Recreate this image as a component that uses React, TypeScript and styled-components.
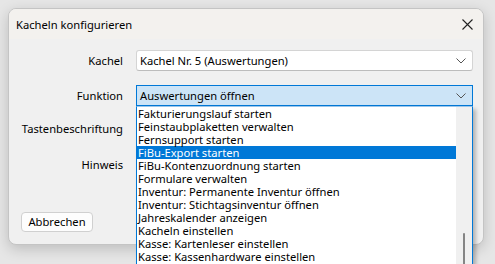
import { styled, createGlobalStyle } from "styled-components";

const GlobalStyle = createGlobalStyle`
  html, body {
    margin: 0;
    padding: 0;
    background: #e6e6e6;
    overflow: hidden;
  }

  body {
    font-family: "Noto Sans", "Open Sans", sans-serif;
    font-size: 11.2px;
    color: #000;
  }
`;

const items = [
  "Fakturierungslauf starten",
  "Feinstaubplaketten verwalten",
  "Fernsupport starten",
  "FiBu-Export starten",
  "FiBu-Kontenzuordnung starten",
  "Formulare verwalten",
  "Inventur: Permanente Inventur öffnen",
  "Inventur: Stichtagsinventur öffnen",
  "Jahreskalender anzeigen",
  "Kacheln einstellen",
  "Kasse: Kartenleser einstellen",
  "Kasse: Kassenhardware einstellen",
];

const Chevron = () => (
  <svg width="10" height="6" viewBox="0 0 10 6">
    <polyline points="0.5,0.5 5,5 9.5,0.5" fill="none" stroke="#555" strokeWidth="1" />
  </svg>
);

export default function App() {
  return (
    <>
      <GlobalStyle />
      <Page>
        <DialogStyled>
          <TitleBar>
            <span>Kacheln konfigurieren</span>
            <CloseButton aria-label="Schließen">
              <svg width="11" height="11" viewBox="0 0 11 11">
                <path d="M0.5 0.5 L10.5 10.5 M10.5 0.5 L0.5 10.5" stroke="#222" strokeWidth="1.1" />
              </svg>
            </CloseButton>
          </TitleBar>

          <Body>
            <Row $top={11}>
              <Label>Kachel</Label>
              <Combo>
                <span>Kachel Nr. 5 (Auswertungen)</span>
                <Chevron />
              </Combo>
            </Row>

            <Row $top={14}>
              <Label>Funktion</Label>
              <FieldWrap>
                <Combo $active>
                  <span>Auswertungen öffnen</span>
                  <Chevron />
                </Combo>

                <DropList>
                  <Options>
                    {items.map((item) => (
                      <Option key={item} $selected={item === "FiBu-Export starten"}>
                        {item}
                      </Option>
                    ))}
                  </Options>
                  <ScrollTrack>
                    <ScrollThumb />
                  </ScrollTrack>
                </DropList>
              </FieldWrap>
            </Row>

            <Row $top={12}>
              <Label>Tastenbeschriftung</Label>
              <TextBox />
            </Row>

            <Row $top={15}>
              <Label>Hinweis</Label>
              <TextBox />
            </Row>

            <Footer>
              <Button>Abbrechen</Button>
            </Footer>
          </Body>
        </DialogStyled>
      </Page>
    </>
  );
}

const Page = styled.div`
  width: 495px;
  height: 264px;
  padding: 8px 0 0 8px;
  box-sizing: border-box;
`;

const DialogStyled = styled.div`
  width: 476px;
  height: 237px;
  box-sizing: border-box;
  border: 1px solid #c4c4c4;
  border-radius: 8px;
  background: #f0f0f0;
  box-shadow: 0 4px 14px rgba(0, 0, 0, 0.18);
  display: flex;
  flex-direction: column;
`;

const TitleBar = styled.div`
  height: 30px;
  flex-shrink: 0;
  display: flex;
  align-items: center;
  justify-content: space-between;
  padding: 0 9px 0 7px;
  background: #f3f1ee;
  border-radius: 7px 7px 0 0;
`;

const CloseButton = styled.div`
  display: flex;
  align-items: center;
  justify-content: center;
  width: 14px;
  height: 14px;
`;

const Body = styled.div`
  flex: 1;
  display: flex;
  flex-direction: column;
  padding: 0 10px 12px 12px;
  border-radius: 0 0 7px 7px;
`;

const Row = styled.div<{ $top: number }>`
  display: grid;
  grid-template-columns: 102px 337px;
  column-gap: 13px;
  align-items: center;
  height: 21px;
  margin-top: ${({ $top }) => $top}px;
`;

const Label = styled.label`
  text-align: right;
  white-space: nowrap;
  padding-bottom: 1px;
`;

const FieldWrap = styled.div`
  position: relative;
  height: 21px;
`;

const Combo = styled.div<{ $active?: boolean }>`
  height: 21px;
  box-sizing: border-box;
  display: flex;
  align-items: center;
  justify-content: space-between;
  padding: 0 6px 1px 3px;
  background: ${({ $active }) => ($active ? "#cce4f7" : "#fff")};
  border: 1px solid ${({ $active }) => ($active ? "#0078d7" : "#d4d4d4")};
  border-bottom-color: ${({ $active }) => ($active ? "#0078d7" : "#bcbcbc")};
  border-radius: ${({ $active }) => ($active ? "0" : "3px")};
  white-space: nowrap;

  svg {
    margin-top: 1px;
  }
`;

const TextBox = styled.div`
  height: 21px;
  box-sizing: border-box;
  background: #fff;
  border: 1px solid #d4d4d4;
  border-radius: 3px;
`;

const DropList = styled.div`
  position: absolute;
  top: 21px;
  left: 0;
  width: 337px;
  height: 158px;
  box-sizing: border-box;
  display: flex;
  overflow: hidden;
  background: #fff;
  border: 1px solid #0078d7;
  border-top-color: #9cc6ea;
  border-bottom: none;
  box-shadow: 3px 3px 4px rgba(0, 0, 0, 0.25);
  z-index: 2;
`;

const Options = styled.ul`
  flex: 1;
  margin: 0;
  padding: 0;
  list-style: none;
`;

const Option = styled.li<{ $selected?: boolean }>`
  height: 13px;
  line-height: 13px;
  padding-left: 1px;
  white-space: nowrap;
  background: ${({ $selected }) => ($selected ? "#0078d7" : "transparent")};
  color: ${({ $selected }) => ($selected ? "#fff" : "#000")};
`;

const ScrollTrack = styled.div`
  width: 16px;
  flex-shrink: 0;
  background: #f0f0f0;
  display: flex;
  justify-content: center;
  padding-top: 126px;
`;

const ScrollThumb = styled.div`
  width: 2px;
  height: 60px;
  background: #858585;
  border-radius: 1px;
`;

const Footer = styled.div`
  margin-top: auto;
  display: flex;
`;

const Button = styled.button`
  width: 72px;
  height: 20px;
  padding: 0 0 1px;
  font-family: inherit;
  font-size: 11.2px;
  color: #000;
  background: #fdfdfd;
  border: 1px solid #d0d0d0;
  border-radius: 4px;
`;
